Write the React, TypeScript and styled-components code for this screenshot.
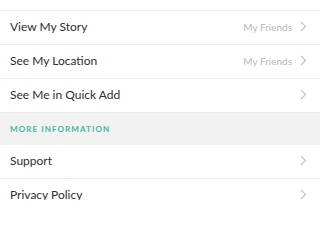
import React from "react"
import styled, { createGlobalStyle } from "styled-components"

const GlobalStyle = createGlobalStyle`
  html, body {
    margin: 0;
    padding: 0;
    background: #ffffff;
  }
  body {
    font-family: Lato, "Noto Sans", "Liberation Sans", sans-serif;
  }
`

type Item = {
  label: string
  value?: string
}

const whoCan: Item[] = [
  { label: "View My Story", value: "My Friends" },
  { label: "See My Location", value: "My Friends" },
  { label: "See Me in Quick Add" },
]

const moreInfo: Item[] = [{ label: "Support" }, { label: "Privacy Policy" }]

const Chevron = () => (
  <ChevronIcon width="7" height="11" viewBox="0 0 7 11">
    <path d="M1 1 L5.5 5.5 L1 10" fill="none" stroke="#c4c4c4" strokeWidth="1.2" />
  </ChevronIcon>
)

const Row: React.FC<Item> = ({ label, value }) => (
  <RowWrapper>
    <Label>{label}</Label>
    <Right>
      {value && <Value>{value}</Value>}
      <Chevron />
    </Right>
  </RowWrapper>
)

const App = () => (
  <>
    <GlobalStyle />
    <Screen>
      <TopCut />
      {whoCan.map(item => (
        <Row key={item.label} {...item} />
      ))}
      <SectionHeader>More Information</SectionHeader>
      {moreInfo.map(item => (
        <Row key={item.label} {...item} />
      ))}
    </Screen>
  </>
)

const Screen = styled.div`
  width: 320px;
  height: 200px;
  overflow: hidden;
  background: #ffffff;
`

const TopCut = styled.div`
  height: 10px;
  border-bottom: 1px solid #ececec;
`

const RowWrapper = styled.div`
  display: flex;
  align-items: center;
  justify-content: space-between;
  height: 33px;
  padding: 0 13px 2px 10px;
  box-sizing: border-box;
  height: 34px;
  border-bottom: 1px solid #ececec;
`

const Label = styled.span`
  font-size: 12px;
  color: #2e2e2e;
`

const Right = styled.div`
  display: flex;
  align-items: center;
  gap: 8px;
`

const Value = styled.span`
  font-size: 10px;
  color: #b8b8b8;
`

const ChevronIcon = styled.svg`
  display: block;
`

const SectionHeader = styled.div`
  display: flex;
  align-items: center;
  height: 32px;
  padding: 0 10px;
  background: #f2f2f2;
  color: #3cb9a2;
  font-size: 8px;
  font-weight: 700;
  letter-spacing: 1.1px;
  text-transform: uppercase;
`

export default App
